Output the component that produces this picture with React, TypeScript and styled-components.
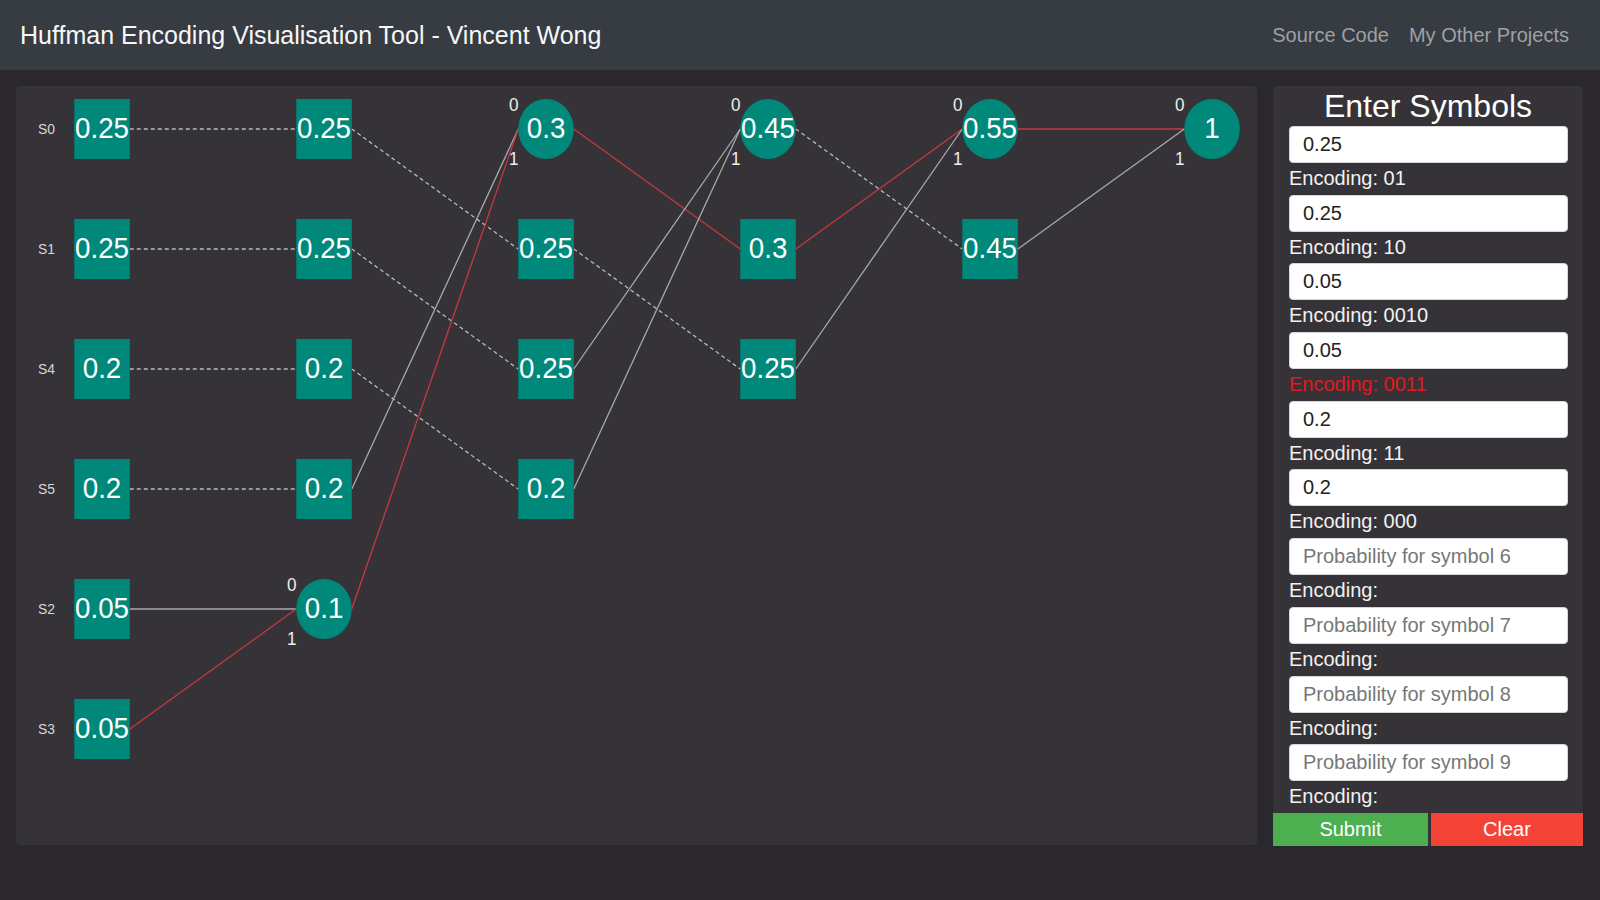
import React from "react";
import styled, { createGlobalStyle } from "styled-components";

const GlobalStyle = createGlobalStyle`
  html, body { margin: 0; padding: 0; background: #2a282c; }
  body { font-family: "Liberation Sans", Arial, sans-serif; }
  * { box-sizing: border-box; }
`;

const Page = styled.div`
  width: 1600px;
  height: 900px;
  background: #2a282c;
  overflow: hidden;
`;

const Header = styled.header`
  height: 70px;
  background: #373b42;
  display: flex;
  align-items: center;
  justify-content: space-between;
  padding: 0 21px 0 20px;
`;

const Brand = styled.div`
  color: #f6f7f8;
  font-size: 25px;
`;

const Nav = styled.nav`
  display: flex;
  align-items: center;
`;

const NavLink = styled.a`
  color: #9ea1a5;
  font-size: 20px;
  padding: 0 10px;
  text-decoration: none;
  cursor: pointer;
`;

const Main = styled.main`
  display: flex;
  gap: 16px;
  padding: 16px 17px 0 16px;
`;

const Canvas = styled.section`
  flex: 1;
  height: 759px;
  background: #353337;
  border-radius: 4px;
  overflow: hidden;
  svg { display: block; width: 100%; height: 100%; }
`;

const SidePanel = styled.aside`
  width: 310px;
  height: 759px;
  background: #353337;
  border-radius: 4px 4px 0 0;
  display: flex;
  flex-direction: column;
`;

const PanelTitle = styled.h2`
  margin: 0;
  color: #ffffff;
  font-size: 32px;
  font-weight: 400;
  line-height: 40px;
  text-align: center;
`;

const Fields = styled.div`
  padding: 0 15px 0 16px;
  display: flex;
  flex-direction: column;
  flex: 1;
`;

const ProbInput = styled.input`
  height: 37px;
  width: 100%;
  border: 1px solid #d6d6d6;
  border-radius: 4px;
  background: #ffffff;
  color: #222;
  font-family: "Liberation Sans", Arial, sans-serif;
  font-size: 20px;
  padding: 0 13px;
  outline: none;
  &::placeholder { color: #777; }
`;

const Encoding = styled.div<{ $hot?: boolean }>`
  height: 31.7px;
  line-height: 31.7px;
  font-size: 20px;
  color: ${(p) => (p.$hot ? "#e5161c" : "#f2f2f2")};
`;

const Buttons = styled.div`
  display: grid;
  grid-template-columns: 155px 152px;
  gap: 3px;
`;

const Btn = styled.button<{ $kind: "ok" | "no" }>`
  height: 33px;
  border: none;
  color: #fff;
  font-family: "Liberation Sans", Arial, sans-serif;
  font-size: 20px;
  background: ${(p) => (p.$kind === "ok" ? "#4caf50" : "#f44336")};
  cursor: pointer;
`;

type Kind = "box" | "circle";
type N = { col: number; row: number; v: string; kind: Kind };

const nodes: N[] = [
  ...["0.25", "0.25", "0.2", "0.2", "0.05", "0.05"].map((v, row) => ({ col: 0, row, v, kind: "box" as Kind })),
  ...["0.25", "0.25", "0.2", "0.2"].map((v, row) => ({ col: 1, row, v, kind: "box" as Kind })),
  { col: 1, row: 4, v: "0.1", kind: "circle" },
  { col: 2, row: 0, v: "0.3", kind: "circle" },
  { col: 2, row: 1, v: "0.25", kind: "box" },
  { col: 2, row: 2, v: "0.25", kind: "box" },
  { col: 2, row: 3, v: "0.2", kind: "box" },
  { col: 3, row: 0, v: "0.45", kind: "circle" },
  { col: 3, row: 1, v: "0.3", kind: "box" },
  { col: 3, row: 2, v: "0.25", kind: "box" },
  { col: 4, row: 0, v: "0.55", kind: "circle" },
  { col: 4, row: 1, v: "0.45", kind: "box" },
  { col: 5, row: 0, v: "1", kind: "circle" },
];

type E = [number, number, number, "d" | "s" | "r"];
const edges: E[] = [
  [0, 0, 0, "d"], [0, 1, 1, "d"], [0, 2, 2, "d"], [0, 3, 3, "d"], [0, 4, 4, "s"], [0, 5, 4, "r"],
  [1, 0, 1, "d"], [1, 1, 2, "d"], [1, 2, 3, "d"], [1, 3, 0, "s"], [1, 4, 0, "r"],
  [2, 0, 1, "r"], [2, 1, 2, "d"], [2, 2, 0, "s"], [2, 3, 0, "s"],
  [3, 0, 1, "d"], [3, 1, 0, "r"], [3, 2, 0, "s"],
  [4, 0, 0, "r"], [4, 1, 0, "s"],
];

const symbols = ["S0", "S1", "S4", "S5", "S2", "S3"];

const VW = 1341.6;
const VH = 759;
const cx = (c: number) => 93 + 240 * c;
const cy = (r: number) => 43 + 120 * r;
const FONT = '"Liberation Sans", Arial, sans-serif';

const strokeFor = (s: "d" | "s" | "r") =>
  s === "r" ? "#c9383f" : s === "s" ? "#a9a9ad" : "#b9b9bc";

const Tree: React.FC = () => (
  <svg viewBox={`0 0 ${VW} ${VH}`} preserveAspectRatio="none">
    {edges.map(([c, r1, r2, s], i) => (
      <line
        key={i}
        x1={cx(c) + 30}
        y1={cy(r1)}
        x2={cx(c + 1) - 30}
        y2={cy(r2)}
        stroke={strokeFor(s)}
        strokeWidth={1.3}
        strokeDasharray={s === "d" ? "4 3" : undefined}
        vectorEffect="non-scaling-stroke"
      />
    ))}
    {symbols.map((s, r) => (
      <text key={s} x={33} y={cy(r) + 5.5} textAnchor="middle" fill="#d6d6d8" fontSize={15} fontFamily={FONT}>
        {s}
      </text>
    ))}
    {nodes.map((n, i) => {
      const x = cx(n.col);
      const y = cy(n.row);
      return (
        <g key={i}>
          {n.kind === "box" ? (
            <rect x={x - 30} y={y - 30} width={60} height={60} fill="#00897b" />
          ) : (
            <>
              <ellipse cx={x} cy={y} rx={30} ry={30} fill="#00897b" />
              <text x={x - 35} y={y - 17.5} textAnchor="middle" fill="#eeeeee" fontSize={18.5} fontFamily={FONT}>0</text>
              <text x={x - 35} y={y + 36.5} textAnchor="middle" fill="#eeeeee" fontSize={18.5} fontFamily={FONT}>1</text>
            </>
          )}
          <text x={x} y={y + 9} textAnchor="middle" fill="#ffffff" fontSize={30} fontFamily={FONT}>
            {n.v}
          </text>
        </g>
      );
    })}
  </svg>
);

const values = ["0.25", "0.25", "0.05", "0.05", "0.2", "0.2", "", "", "", ""];
const codes = ["01", "10", "0010", "0011", "11", "000", "", "", "", ""];

export default function App() {
  return (
    <Page>
      <GlobalStyle />
      <Header>
        <Brand>Huffman Encoding Visualisation Tool - Vincent Wong</Brand>
        <Nav>
          <NavLink>Source Code</NavLink>
          <NavLink>My Other Projects</NavLink>
        </Nav>
      </Header>
      <Main>
        <Canvas>
          <Tree />
        </Canvas>
        <SidePanel>
          <PanelTitle>Enter Symbols</PanelTitle>
          <Fields>
            {values.map((v, i) => (
              <React.Fragment key={i}>
                <ProbInput defaultValue={v} placeholder={`Probability for symbol ${i}`} />
                <Encoding $hot={i === 3}>Encoding: {codes[i]}</Encoding>
              </React.Fragment>
            ))}
          </Fields>
          <Buttons>
            <Btn $kind="ok">Submit</Btn>
            <Btn $kind="no">Clear</Btn>
          </Buttons>
        </SidePanel>
      </Main>
    </Page>
  );
}
